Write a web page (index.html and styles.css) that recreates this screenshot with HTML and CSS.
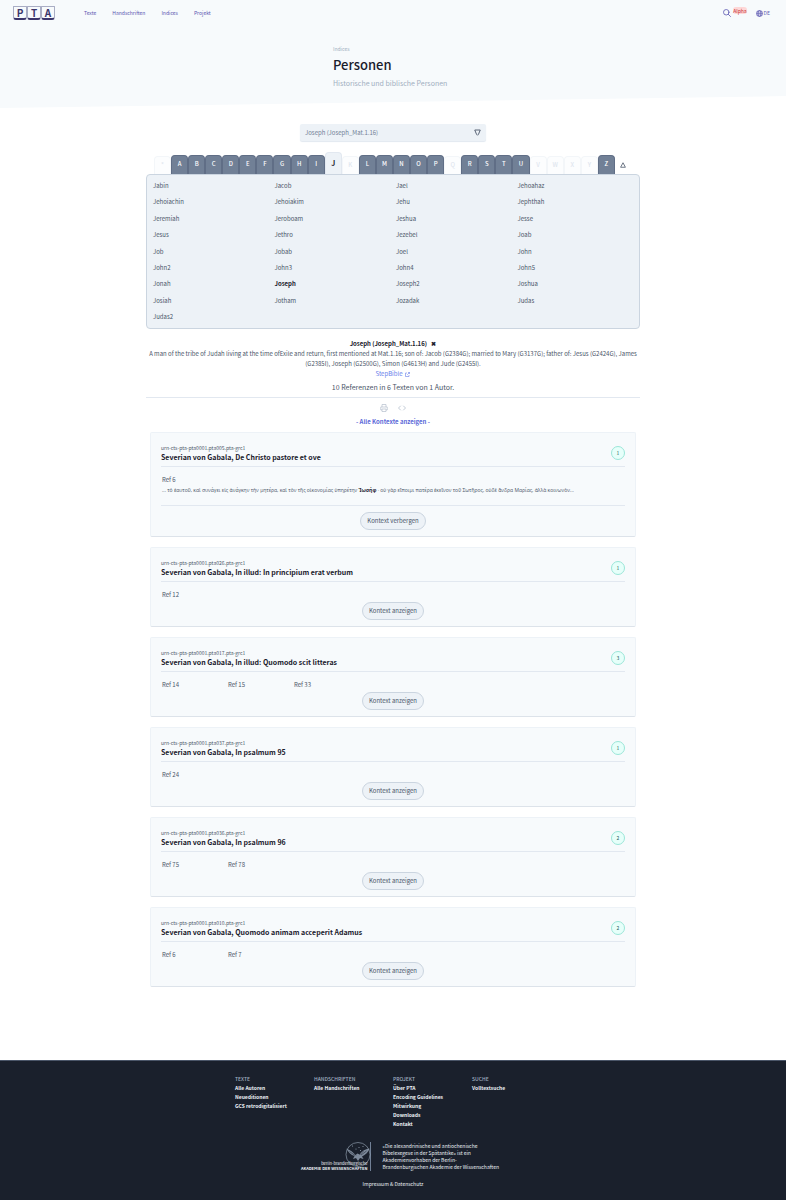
FILE: index.html
```html
<!DOCTYPE html>
<html lang="de">
<head>
<meta charset="utf-8">
<title>Personen – PTA</title>
<meta name="viewport" content="width=device-width, initial-scale=1">
<link rel="stylesheet" href="styles.css">
</head>
<body>
<div class="hero">
  <header class="topbar">
    <a class="logo" href="#" aria-label="PTA"><span class="tile">P</span><span class="tile">T</span><span class="tile">A</span></a>
    <nav class="nav"><a href="#">Texte</a><a href="#">Handschriften</a><a href="#">Indices</a><a href="#">Projekt</a></nav>
    <div class="tools">
      <a href="#" class="search" aria-label="Suche"><svg width="8" height="8" viewBox="0 0 16 16" fill="none" stroke="currentColor" stroke-width="1.6" stroke-linecap="round"><circle cx="6.5" cy="6.5" r="5.5"/><path d="M10.7 10.7 15 15"/></svg></a>
      <span class="alpha">Alpha</span>
      <a href="#" class="lang"><svg width="7" height="7" viewBox="0 0 16 16" fill="none" stroke="currentColor" stroke-width="1.5"><circle cx="8" cy="8" r="7"/><ellipse cx="8" cy="8" rx="3.3" ry="7"/><path d="M1 8h14M2 4.5h12M2 11.5h12"/></svg><span>DE</span></a>
    </div>
  </header>
  <div class="title">
    <p class="crumb">Indices</p>
    <h1>Personen</h1>
    <p class="sub">Historische und biblische Personen</p>
  </div>
</div>

<main class="main">
  <div class="picker">
    <select aria-label="Person"><option>Joseph (Joseph_Mat.1.16)</option></select>
    <svg class="caret" width="7" height="7" viewBox="0 0 14 14" fill="none" stroke="currentColor" stroke-width="1.8"><path d="M1.5 2h11L9 10.500 7 12.500 5 10.500z"/></svg>
  </div>

  <div class="tabs">
    <button class="off" disabled>*</button><button>A</button><button>B</button><button>C</button><button>D</button><button>E</button><button>F</button><button>G</button><button>H</button><button>I</button><button class="current">J</button><button class="off" disabled>K</button><button>L</button><button>M</button><button>N</button><button>O</button><button>P</button><button class="off" disabled>Q</button><button>R</button><button>S</button><button>T</button><button>U</button><button class="off" disabled>V</button><button class="off" disabled>W</button><button class="off" disabled>X</button><button class="off" disabled>Y</button><button>Z</button><button class="fold" aria-label="Einklappen"><svg width="6" height="6" viewBox="0 0 12 12" fill="none" stroke="currentColor" stroke-width="1.600"><path d="M6 1.500 10.800 10.500H1.200z"/></svg></button>
  </div>
  <ul class="names">
    <li><a href="#">Jabin</a></li><li><a href="#">Jacob</a></li><li><a href="#">Jael</a></li><li><a href="#">Jehoahaz</a></li>
    <li><a href="#">Jehoiachin</a></li><li><a href="#">Jehoiakim</a></li><li><a href="#">Jehu</a></li><li><a href="#">Jephthah</a></li>
    <li><a href="#">Jeremiah</a></li><li><a href="#">Jeroboam</a></li><li><a href="#">Jeshua</a></li><li><a href="#">Jesse</a></li>
    <li><a href="#">Jesus</a></li><li><a href="#">Jethro</a></li><li><a href="#">Jezebel</a></li><li><a href="#">Joab</a></li>
    <li><a href="#">Job</a></li><li><a href="#">Jobab</a></li><li><a href="#">Joel</a></li><li><a href="#">John</a></li>
    <li><a href="#">John2</a></li><li><a href="#">John3</a></li><li><a href="#">John4</a></li><li><a href="#">John5</a></li>
    <li><a href="#">Jonah</a></li><li><a href="#" class="active">Joseph</a></li><li><a href="#">Joseph2</a></li><li><a href="#">Joshua</a></li>
    <li><a href="#">Josiah</a></li><li><a href="#">Jotham</a></li><li><a href="#">Jozadak</a></li><li><a href="#">Judas</a></li>
    <li><a href="#">Judas2</a></li>
  </ul>

  <section class="person">
    <h2>Joseph (Joseph_Mat.1.16) <button class="close" aria-label="Schließen">✖</button></h2>
    <p class="bio">A man of the tribe of Judah living at the time ofExile and return, first mentioned at Mat.1.16; son of: Jacob (G2384G); married to Mary (G3137G); father of: Jesus (G2424G), James (G2385I), Joseph (G2500G), Simon (G4613H) and Jude (G2455I).</p>
    <a class="ext" href="#">StepBible <svg width="5" height="5" viewBox="0 0 10 10" fill="none" stroke="currentColor" stroke-width="1.200"><path d="M4 2H1v7h7V6M6 1h3v3M9 1 4.500 5.500"/></svg></a>
    <p class="count">10 Referenzen in 6 Texten von 1 Autor.</p>
  </section>

  <div class="actions">
    <button aria-label="Drucken"><svg width="8" height="8" viewBox="0 0 16 16" fill="none" stroke="currentColor" stroke-width="1.400"><path d="M4 6V1h8v5M4 12H1.500V6h13v6H12M4 10h8v5H4z"/></svg></button>
    <button aria-label="Quelltext"><svg width="8" height="8" viewBox="0 0 16 16" fill="none" stroke="currentColor" stroke-width="1.600"><path d="M5.500 3.500 1 8l4.500 4.500M10.500 3.500 15 8l-4.500 4.500"/></svg></button>
  </div>
  <a class="all" href="#">- Alle Kontexte anzeigen -</a>

  <div class="cards">
    <article class="card">
      <header><div><p class="urn">urn-cts-pta-pta0001.pta005.pta-grc1</p><h3>Severian von Gabala, De Christo pastore et ove</h3></div><span class="badge">1</span></header>
      <div class="refs"><span>Ref 6</span></div>
      <p class="context" lang="grc">... τὸ ἑαυτοῦ, καὶ συνάγει εἰς ἀνάγκην τὴν μητέρα, καὶ τὸν τῆς οἰκονομίας ὑπηρέτην <b>Ἰωσήφ</b> · οὐ γὰρ εἴποιμι πατέρα ἐκεῖνον τοῦ Σωτῆρος, οὐδὲ ἄνδρα Μαρίας, ἀλλὰ κοινωνὸν...</p>
      <button class="pill">Kontext verbergen</button>
    </article>
    <article class="card">
      <header><div><p class="urn">urn-cts-pta-pta0001.pta026.pta-grc1</p><h3>Severian von Gabala, In illud: In principium erat verbum</h3></div><span class="badge">1</span></header>
      <div class="refs"><span>Ref 12</span></div>
      <button class="pill">Kontext anzeigen</button>
    </article>
    <article class="card">
      <header><div><p class="urn">urn-cts-pta-pta0001.pta017.pta-grc1</p><h3>Severian von Gabala, In illud: Quomodo scit litteras</h3></div><span class="badge">3</span></header>
      <div class="refs"><span>Ref 14</span><span>Ref 15</span><span>Ref 33</span></div>
      <button class="pill">Kontext anzeigen</button>
    </article>
    <article class="card">
      <header><div><p class="urn">urn-cts-pta-pta0001.pta037.pta-grc1</p><h3>Severian von Gabala, In psalmum 95</h3></div><span class="badge">1</span></header>
      <div class="refs"><span>Ref 24</span></div>
      <button class="pill">Kontext anzeigen</button>
    </article>
    <article class="card">
      <header><div><p class="urn">urn-cts-pta-pta0001.pta036.pta-grc1</p><h3>Severian von Gabala, In psalmum 96</h3></div><span class="badge">2</span></header>
      <div class="refs"><span>Ref 75</span><span>Ref 78</span></div>
      <button class="pill">Kontext anzeigen</button>
    </article>
    <article class="card">
      <header><div><p class="urn">urn-cts-pta-pta0001.pta010.pta-grc1</p><h3>Severian von Gabala, Quomodo animam acceperit Adamus</h3></div><span class="badge">2</span></header>
      <div class="refs"><span>Ref 6</span><span>Ref 7</span></div>
      <button class="pill">Kontext anzeigen</button>
    </article>
  </div>
</main>

<footer class="footer">
  <div class="cols">
    <div><h4>Texte</h4><a href="#">Alle Autoren</a><a href="#">Neueditionen</a><a href="#">GCS retrodigitalisiert</a></div>
    <div><h4>Handschriften</h4><a href="#">Alle Handschriften</a></div>
    <div><h4>Projekt</h4><a href="#">Über PTA</a><a href="#">Encoding Guidelines</a><a href="#">Mitwirkung</a><a href="#">Downloads</a><a href="#">Kontakt</a></div>
    <div><h4>Suche</h4><a href="#">Volltextsuche</a></div>
  </div>
  <div class="academy">
    <div class="bbaw">
      <svg class="eagle" width="26" height="26" viewBox="0 0 52 52" fill="none" stroke="currentColor"><circle cx="26" cy="25" r="24" stroke-width="1.200"/><path fill="currentColor" stroke="none" opacity=".75" d="M3 13c6 3 13 6 18 13l4-3 4 2c4-7 11-10 20-12-2 7-8 13-15 16l3 5-7-2-4 6-4-6-6 2 3-6C12 26 6 20 3 13z"/><path stroke="#1a202c" stroke-width="1" d="m9 19 11 8M15 19l7 8M43 18l-11 8M37 18l-8 8"/><g fill="currentColor" stroke="none"><circle cx="15" cy="8" r="1"/><circle cx="22" cy="14" r="1"/><circle cx="28" cy="11" r="1"/><circle cx="36" cy="9" r="1"/><circle cx="31" cy="17" r="1"/></g></svg>
      <div class="bbaw-name"><span>berlin-brandenburgische</span><strong>AKADEMIE DER WISSENSCHAFTEN</strong></div>
    </div>
    <p>«Die alexandrinische und antiochenische Bibelexegese in der Spätantike» ist ein Akademienvorhaben der Berlin-Brandenburgischen Akademie der Wissenschaften</p>
  </div>
  <a class="imprint" href="#">Impressum &amp; Datenschutz</a>
</footer>
</body>
</html>
```

FILE: styles.css
```css
* { box-sizing: border-box; margin: 0; padding: 0; }
body {
  font-family: "Noto Sans CJK SC", "Noto Sans", sans-serif;
  font-size: 6px;
  line-height: 10px;
  color: #4a5568;
  background: #fff;
  display: flex;
  flex-direction: column;
  min-height: 100vh;
}
a { color: inherit; text-decoration: none; }
button { font: inherit; color: inherit; border: 0; background: none; cursor: pointer; }
svg { display: block; }

.hero {
  background: #f7fafc;
  padding-bottom: 18px;
  clip-path: polygon(0 0, 100% 0, 100% 89%, 0 100%);
}
.topbar { display: flex; align-items: center; height: 26px; padding: 0 16px 0 13px; color: #5a55b0; }
.logo { display: flex; color: #3c366b; }
.tile {
  width: 14px; height: 14px;
  border: 1px solid #a9adc4; border-bottom: 2px solid #3c366b; border-radius: 1px 1px 3px 3px;
  font-size: 10px; font-weight: 700; line-height: 12px; text-align: center;
}
.nav { display: flex; gap: 16px; margin-left: 29px; font-size: 5px; }
.tools { display: flex; align-items: center; margin-left: auto; }
.alpha {
  margin: 0 9px 6px 2px;
  background: #fed7d7; color: #c53030; border-radius: 3px; font-size: 5px; line-height: 7px;
}
.lang { display: flex; align-items: center; gap: 1px; font-size: 5px; }
.title { width: 120px; margin: 18px auto 0; white-space: nowrap; }
.crumb { font-size: 5px; color: #a0aec0; }
.title h1 { font-size: 13px; line-height: 22px; font-weight: 500; color: #1a202c; }
.sub { font-size: 7px; line-height: 14px; color: #a0aec0; }

.main { width: 100%; max-width: 494px; margin: 16px auto 0; display: flex; flex-direction: column; align-items: stretch; }
.picker { position: relative; width: 186px; align-self: center; }
.picker select {
  display: block; appearance: none; width: 100%; height: 17px; padding: 0 5px;
  font: inherit; color: #718096; background: #edf2f7; border: 0; border-radius: 2px;
  box-shadow: 0 1px 1px #e2e8f0;
}
.caret { position: absolute; right: 5px; top: 5px; color: #4a5568; }

.tabs { display: grid; grid-template-columns: repeat(28, 1fr); align-items: end; padding: 0 8px; margin-top: 11px; }
.tabs button {
  height: 19px; border: 1px solid #606e86; border-bottom: 0; border-radius: 4px 4px 0 0;
  background: #718096; color: #fff; font-weight: 500; line-height: 10px; padding-bottom: 2px;
}
.tabs .off { height: 18px; background: #fcfdfe; color: #dfe6ee; border-color: #f3f6f9; }
.tabs .current { height: 22px; background: #edf2f7; color: #1a202c; font-size: 7px; font-weight: 700; border-color: #e2e8f0; }
.tabs .fold { background: none; border: 0; color: #4a5568; display: grid; place-items: center; padding: 0; }

.names {
  list-style: none; display: grid; grid-template-columns: repeat(4, 1fr); align-content: space-between;
  min-height: 155px; padding: 5px 0 5px 6px;
  background: #edf2f7; border: 1px solid #cbd5e0; border-radius: 4px;
}
.names li { line-height: 12px; }
.active { font-weight: 700; color: #1a202c; }

.person { padding: 10px 0 2px; text-align: center; border-bottom: 1px solid #e2e8f0; }
.person h2 { font-size: 6px; line-height: 10px; color: #1a202c; }
.close { margin-left: 3px; line-height: 8px; }
.ext { display: inline-flex; align-items: center; gap: 3px; color: #667eea; }
.count { font-size: 7px; line-height: 16px; }
.actions { display: flex; justify-content: center; gap: 10px; padding: 6px 0 5px; color: #b4bfcd; }
.all { align-self: center; color: #5a67d8; font-weight: 700; }

.cards { display: flex; flex-direction: column; gap: 10px; margin: 5px 4px 0; }
.card {
  display: flex; flex-direction: column; padding: 10px 10px 6px;
  background: #f7fafc; border: 1px solid #edf2f7; border-bottom-color: #dde3ea; border-radius: 2px;
}
.card header { display: flex; justify-content: space-between; align-items: center; padding-bottom: 3px; border-bottom: 1px solid #e2e8f0; }
.urn { font-size: 5px; line-height: 9px; }
.card h3 { font-size: 7px; line-height: 11px; color: #1a202c; }
.badge {
  width: 14px; height: 14px; border: 1px solid #9ae6d8; border-radius: 50%; background: #e6fffa;
  color: #285e61; font-size: 5px; line-height: 12px; text-align: center;
}
.refs { display: grid; grid-template-columns: repeat(7, 1fr); padding: 8px 1px 0; }
.context { font-family: "Open Sans", "Noto Sans", sans-serif; font-size: 5px; line-height: 10px; margin: 0 0 4px; padding: 0 1px 10px; border-bottom: 1px solid #e2e8f0; }
.context b { color: #1a202c; }
.pill {
  align-self: center; margin-top: 2px; padding: 3px 6px; background: #edf2f7; border: 1px solid #cbd5e0; border-radius: 9px;
  line-height: 10px;
}

.footer { margin-top: auto; background: #1a202c; color: #edf2f7; border-top: 1px solid #4a5568; padding: 14px 0 12px; font-size: 5px; line-height: 9px; }
.cols { display: grid; grid-template-columns: repeat(4, 1fr); width: 316px; margin: 0 auto; }
.cols h4 { font-size: 5px; line-height: 8px; font-weight: 500; color: #a0aec0; text-transform: uppercase; }
.cols a { display: block; font-weight: 700; white-space: nowrap; }
.academy { display: flex; justify-content: center; gap: 12px; margin-top: 14px; padding-left: 14px; line-height: 7px; }
.academy p { width: 118px; }
.bbaw { position: relative; width: 71px; padding-top: 19px; border-right: 1px solid #718096; }
.eagle { position: absolute; right: -1px; top: 0; color: #a0aec0; }
.bbaw-name { position: relative; display: flex; flex-direction: column; align-items: flex-end; line-height: 5px; font-size: 4px; padding-right: 2px; white-space: nowrap; }
.imprint { display: block; margin-top: 8px; text-align: center; }
```
